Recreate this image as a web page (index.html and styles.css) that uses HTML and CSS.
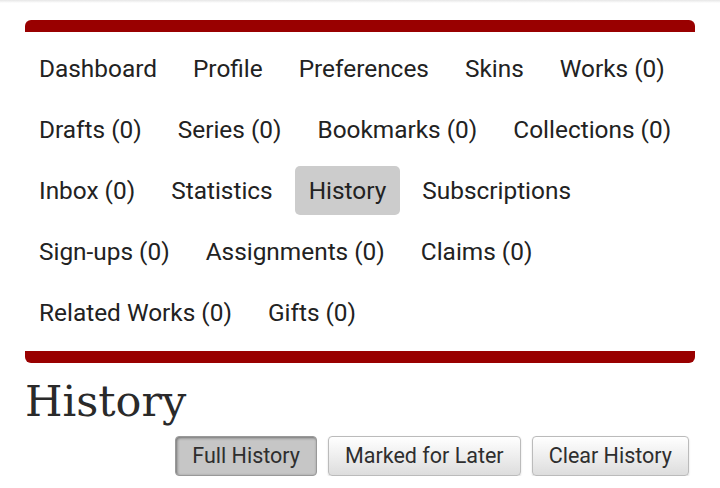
FILE: index.html
```html
<!DOCTYPE html>
<html>
<head>
<meta charset="utf-8">
<link rel="stylesheet" href="styles.css">
</head>
<body>
<div class="topline"></div>
<nav class="dashnav">
  <ul class="navlist">
    <li><a href="#">Dashboard</a></li>
    <li><a href="#">Profile</a></li>
    <li><a href="#">Preferences</a></li>
    <li><a href="#">Skins</a></li>
    <li><a href="#">Works (0)</a></li>
    <li><a href="#">Drafts (0)</a></li>
    <li><a href="#">Series (0)</a></li>
    <li><a href="#">Bookmarks (0)</a></li>
    <li><a href="#">Collections (0)</a></li>
    <li><a href="#">Inbox (0)</a></li>
    <li><a href="#">Statistics</a></li>
    <li><a href="#" class="current">History</a></li>
    <li><a href="#">Subscriptions</a></li>
    <li><a href="#">Sign-ups (0)</a></li>
    <li><a href="#">Assignments (0)</a></li>
    <li><a href="#">Claims (0)</a></li>
    <li><a href="#">Related Works (0)</a></li>
    <li><a href="#">Gifts (0)</a></li>
  </ul>
</nav>
<h2 class="heading">History</h2>
<ul class="actions">
  <li><span class="btn active">Full History</span></li>
  <li><span class="btn">Marked for Later</span></li>
  <li><span class="btn">Clear History</span></li>
</ul>
</body>
</html>
```
FILE: styles.css
```css
html, body {
  margin: 0;
  padding: 0;
  background: #fff;
}
body {
  font-family: Roboto, "Liberation Sans", sans-serif;
  color: #2a2a2a;
}
.topline {
  height: 3px;
  background: linear-gradient(#e6e6e6, #fff);
}
.dashnav {
  margin: 17px 25px 0;
  border-top: 12px solid #990000;
  border-bottom: 12px solid #990000;
  border-radius: 6px;
  padding: 12px 0 14px;
}
.navlist {
  list-style: none;
  margin: 0;
  padding: 0;
  display: flex;
  flex-wrap: wrap;
  column-gap: 8px;
  row-gap: 12px;
}
.navlist a {
  display: block;
  padding: 12px 14px;
  font-size: 24.4px;
  line-height: 25px;
  color: #222;
  text-decoration: none;
  border-radius: 5px;
}
.navlist a.current {
  background: #cccccc;
}
.heading {
  margin: 12px 25px 0;
  font-family: "DejaVu Serif", "Liberation Serif", serif;
  font-weight: normal;
  font-size: 43px;
  line-height: 52px;
  color: #2a2a2a;
}
.actions {
  list-style: none;
  margin: 9px 31px 0 0;
  padding: 0;
  display: flex;
  justify-content: flex-end;
  gap: 11px;
}
.btn {
  display: block;
  height: 40px;
  box-sizing: border-box;
  padding: 0 16px;
  font-size: 21.5px;
  line-height: 38px;
  color: #2e2e2e;
  border: 1px solid #bbb;
  border-radius: 4px;
  background: linear-gradient(#fff 0%, #ddd 100%);
  box-shadow: 0 1px 2px rgba(0,0,0,0.15);
}
.btn.active {
  background: #c6c6c6;
  border-color: #999;
  box-shadow: inset 1px 1px 3px rgba(0,0,0,0.45);
}
```
